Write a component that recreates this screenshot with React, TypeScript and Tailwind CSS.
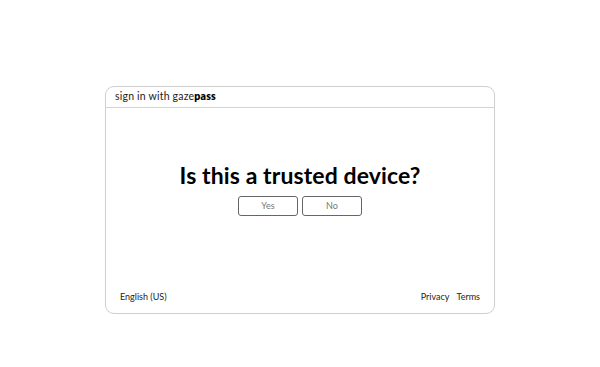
export default function App() {
  return (
    <div className="w-[600px] h-[367px] bg-white pt-[86px] font-['Lato','Noto_Sans',sans-serif] text-[#111]">
      <div className="mx-auto w-[390px] h-[228px] rounded-[9px] border border-[#cfcfcf] flex flex-col">
        <div className="h-[21px] border-b border-[#d4d4d4] flex items-center px-[9px] text-[10.5px] tracking-[0.2px] text-[#222]">
          <span>sign in with gaze</span>
          <span className="font-extrabold text-black">pass</span>
        </div>
        <div className="flex-1 flex flex-col items-center pt-[52px]">
          <h1 className="text-[23px] font-bold leading-[30px] text-black tracking-[0.1px]">
            Is this a trusted device?
          </h1>
          <div className="flex gap-[4px] mt-[6px]">
            <button className="w-[60px] h-[20px] rounded-[3px] border border-[#666] text-[9px] text-[#777]">
              Yes
            </button>
            <button className="w-[60px] h-[20px] rounded-[3px] border border-[#666] text-[9px] text-[#777]">
              No
            </button>
          </div>
        </div>
        <div className="flex justify-between items-center px-[14px] pb-[10px] text-[9px] text-[#222]">
          <span>English (US)</span>
          <div className="flex gap-[7px]">
            <span>Privacy</span>
            <span>Terms</span>
          </div>
        </div>
      </div>
    </div>
  );
}
